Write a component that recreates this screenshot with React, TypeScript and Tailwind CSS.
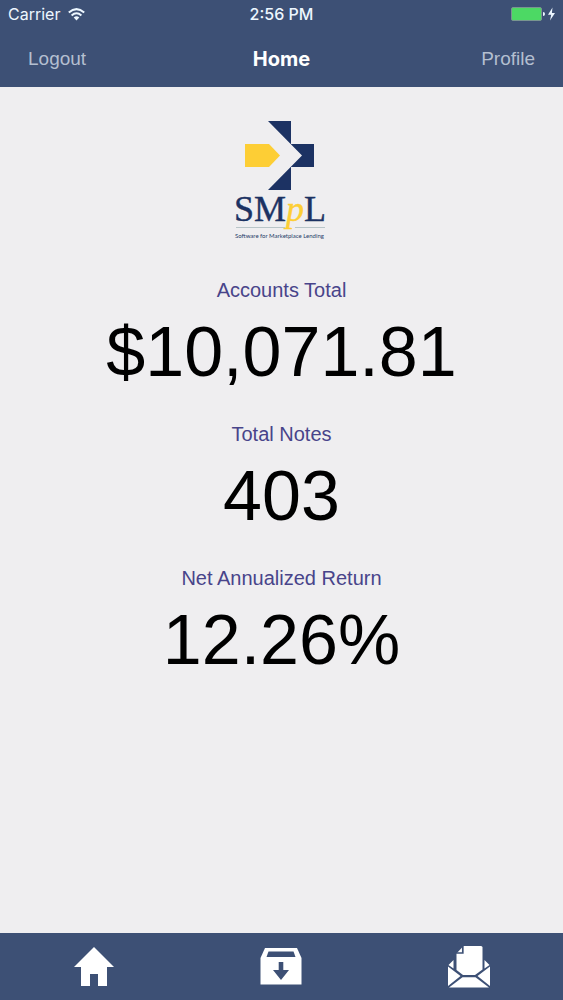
const stats = [
  { label: "Accounts Total", value: "$10,071.81" },
  { label: "Total Notes", value: "403" },
  { label: "Net Annualized Return", value: "12.26%" },
];

function StatusBar() {
  return (
    <div className="grid h-7 grid-cols-3 items-center px-2 font-['Inter',sans-serif] text-base text-[#edf7ff]">
      <div className="flex items-center gap-2">
        <span>Carrier</span>
        <svg viewBox="0 0 17 13" className="h-[13px] w-[17px]" fill="none" stroke="currentColor" strokeWidth="2" aria-label="Wi-Fi">
          <path d="M.8 4.5Q8.5-2.3 16.2 4.5" />
          <path d="M3.6 7.4Q8.5 3.1 13.4 7.4" />
          <path d="M5.7 9.5Q8.5 7 11.3 9.5L8.5 12.4Z" fill="currentColor" stroke="none" />
        </svg>
      </div>
      <span className="text-center font-medium">2:56 PM</span>
      <div className="flex justify-end">
        <svg viewBox="0 0 45 14" className="h-[14px] w-[45px]" aria-label="Battery charging">
          <rect x="1.5" y=".5" width="30" height="13" rx="1.5" fill="#4cd964" stroke="#799590" />
          <path d="M33 5Q35 5 35 7T33 9Z" fill="#edf7ff" />
          <path d="M42.500 .5L38 7.800H41.200L40 13.500L45 6H41.900Z" fill="#edf7ff" />
        </svg>
      </div>
    </div>
  );
}

function Logo() {
  return (
    <svg viewBox="0 0 96 120" className="h-[120px] w-[96px]" role="img" aria-label="SMpL">
      <g fill="#1c3263">
        <path d="M34 1H57V24H80V47H57V70H34L68 35.500Z" />
      </g>
      <path d="M11 24H35L46 35.500L35 47H11Z" fill="#fdce35" />
      <text x="0" y="101" fontSize="36" fill="#1c3263" stroke="#1c3263" strokeWidth=".4" className="font-['Liberation_Serif',serif]">
        SM<tspan fill="#fdce35" stroke="#fdce35" fontStyle="italic">p</tspan>L
      </text>
      <path d="M2 107.500H51M61 107.500H91" stroke="#b9c5c8" />
      <text x="1" y="118" fontSize="6" fill="#263c68" className="font-['Lato',sans-serif]">
        Software for Marketplace Lending
      </text>
    </svg>
  );
}

function HomeIcon() {
  return (
    <svg viewBox="0 0 40 40" className="size-10" fill="#fff">
      <path d="M20 0L40 20H33V39H24V27H16V39H7V20H0Z" />
    </svg>
  );
}

function ArchiveIcon() {
  return (
    <svg viewBox="0 0 42 40" className="h-10 w-[42px]">
      <path d="M5 1H37L41.500 11V37.500H.5V11Z" fill="#fff" />
      <path d="M8.500 4.500H33.500L35.500 10H6.500Z" fill="#3d5075" />
      <path d="M18.700 15H23.300V23H29L21 33L13 23H18.700Z" fill="#3d5075" />
    </svg>
  );
}

function MailIcon() {
  return (
    <svg viewBox="0 0 42 42" className="size-[42px]">
      <path d="M.5 19L5.500 14V22.500ZM41.500 19L36.500 14V22.500Z" fill="#fff" />
      <path d="M0 20.500L12.500 30L0 40ZM42 20.500L29.500 30L42 40Z" fill="#fff" />
      <path d="M8.500 7.500L15.500 0H33Q34.500 0 34.500 1.500V23.500L27 29H15L8.500 24Z" fill="#fff" />
      <path d="M8 7H14.800V0" fill="none" stroke="#3d5075" strokeWidth="1.700" />
      <path d="M14.500 31.300H27.500L41 41.500H1Z" fill="#fff" />
    </svg>
  );
}

const tabs = [
  { name: "Home", Icon: HomeIcon },
  { name: "Downloads", Icon: ArchiveIcon },
  { name: "Messages", Icon: MailIcon },
];

export default function App() {
  return (
    <div className="flex min-h-screen flex-col bg-[#efeef0] font-['Liberation_Sans',sans-serif]">
      <header className="bg-[#3d5075] pb-[5px]">
        <StatusBar />
        <nav className="grid h-[54px] grid-cols-3 items-center px-7 pt-2 text-[19px] leading-6 text-[#b4bfd0]">
          <button type="button" className="justify-self-start">Logout</button>
          <h1 className="text-center font-['Inter',sans-serif] text-xl leading-6 font-bold text-white">Home</h1>
          <button type="button" className="justify-self-end">Profile</button>
        </nav>
      </header>
      <main className="flex flex-1 flex-col items-center pt-[33px]">
        <Logo />
        <dl className="mt-[38px] flex flex-col gap-[30px] text-center">
          {stats.map(({ label, value }) => (
            <div key={label}>
              <dt className="text-xl leading-6 text-[#48448a]">{label}</dt>
              <dd className="mt-2.5 text-[70px] leading-[80px] text-black">{value}</dd>
            </div>
          ))}
        </dl>
      </main>
      <nav className="grid h-[67px] grid-cols-3 items-center bg-[#3d5075]">
        {tabs.map(({ name, Icon }) => (
          <button key={name} type="button" aria-label={name} className="flex h-full items-center justify-center">
            <Icon />
          </button>
        ))}
      </nav>
    </div>
  );
}
